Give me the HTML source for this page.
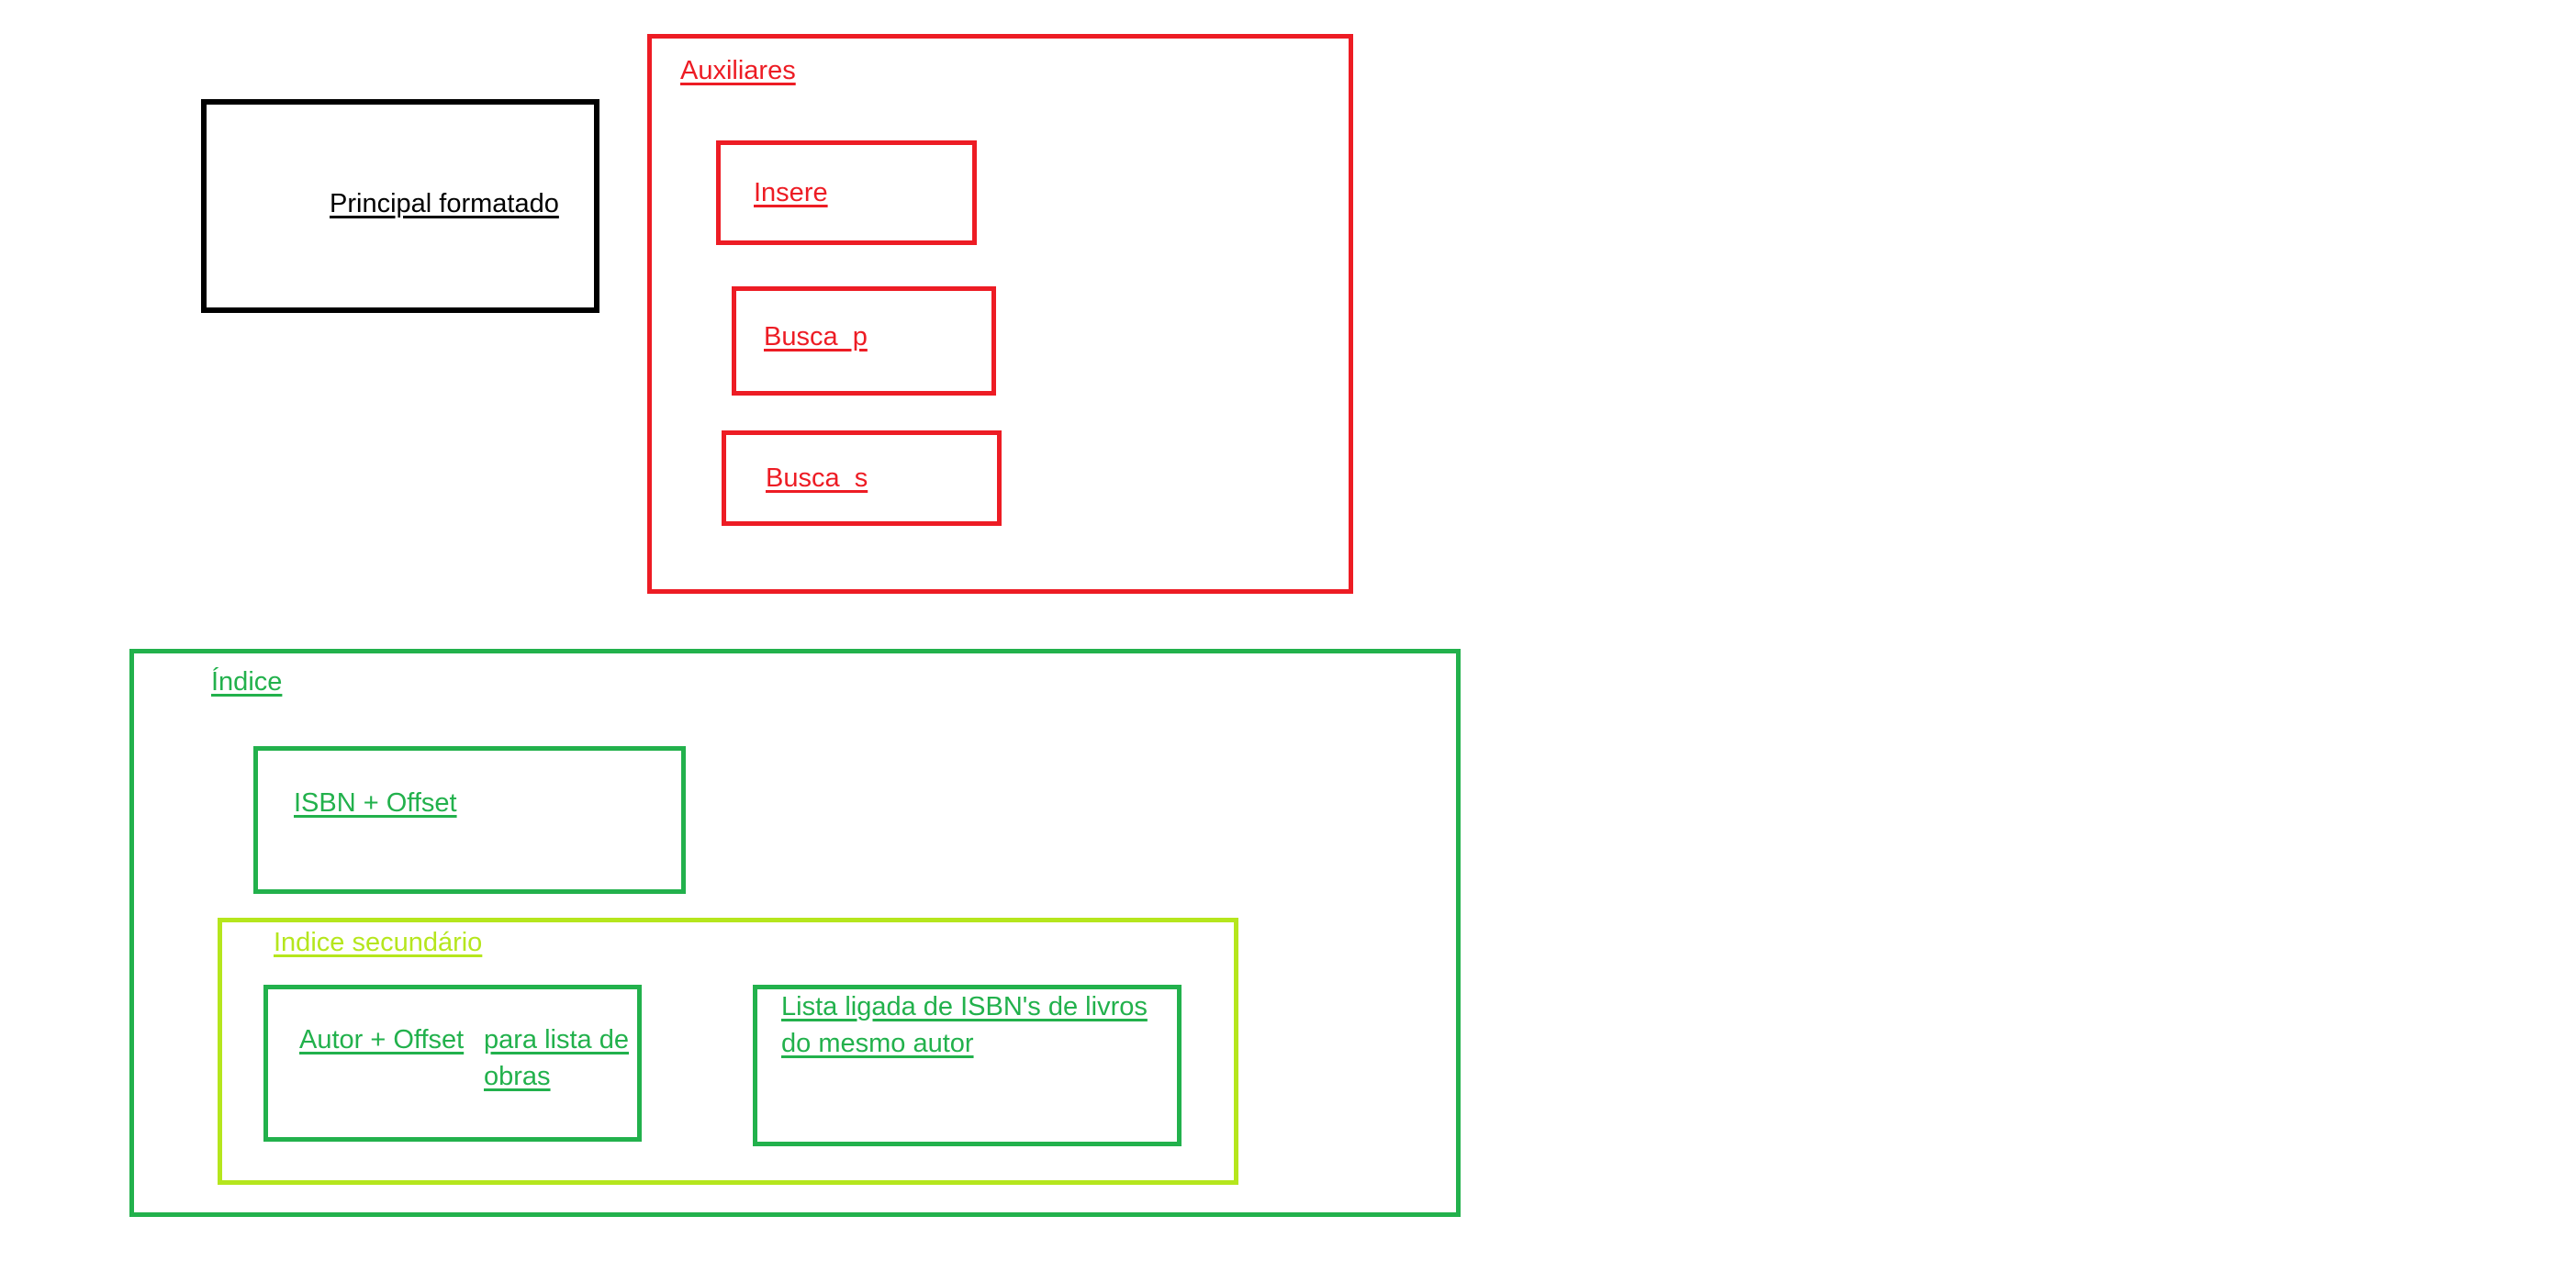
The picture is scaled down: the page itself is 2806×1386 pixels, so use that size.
<!DOCTYPE html>
<html><head><meta charset="utf-8"><style>
html,body{margin:0;padding:0;background:#fff;}
body{width:2806px;height:1386px;position:relative;overflow:hidden;font-family:"Liberation Sans",sans-serif;}
.b{position:absolute;box-sizing:border-box;}
.t{position:absolute;font-size:29px;line-height:30px;text-decoration:underline;text-decoration-thickness:3px;text-underline-offset:4px;white-space:nowrap;}
.r{border:5px solid #ed1c24}.g{border:5px solid #22b14c}.l{border:5px solid #b5e61d}
.cr{color:#ed1c24}.cg{color:#22b14c}.cl{color:#b5e61d}
</style></head><body>
<div class="b" style="left:219px;top:108px;width:434px;height:233px;border:6px solid #000"></div>
<div class="t" style="left:359px;top:207px;color:#000">Principal formatado</div>

<div class="b r" style="left:705px;top:37px;width:769px;height:610px"></div>
<div class="t cr" style="left:741px;top:62px">Auxiliares</div>
<div class="b r" style="left:780px;top:153px;width:284px;height:114px"></div>
<div class="t cr" style="left:821px;top:195px">Insere</div>
<div class="b r" style="left:797px;top:312px;width:288px;height:119px"></div>
<div class="t cr" style="left:832px;top:352px">Busca&nbsp;&nbsp;p</div>
<div class="b r" style="left:786px;top:469px;width:305px;height:104px"></div>
<div class="t cr" style="left:834px;top:506px">Busca&nbsp;&nbsp;s</div>

<div class="b g" style="left:141px;top:707px;width:1450px;height:619px"></div>
<div class="t cg" style="left:230px;top:728px">Índice</div>
<div class="b g" style="left:276px;top:813px;width:471px;height:161px"></div>
<div class="t cg" style="left:320px;top:860px">ISBN + Offset</div>

<div class="b l" style="left:237px;top:1000px;width:1112px;height:291px"></div>
<div class="t cl" style="left:298px;top:1012px">Indice secundário</div>
<div class="b g" style="left:287px;top:1073px;width:412px;height:171px"></div>
<div class="t cg" style="left:326px;top:1118px">Autor + Offset</div>
<div class="t cg" style="left:527px;top:1118px">para lista de</div>
<div class="t cg" style="left:527px;top:1158px">obras</div>
<div class="b g" style="left:820px;top:1073px;width:467px;height:176px"></div>
<div class="t cg" style="left:851px;top:1082px">Lista ligada de ISBN's de livros</div>
<div class="t cg" style="left:851px;top:1122px">do mesmo autor</div>
</body></html>
